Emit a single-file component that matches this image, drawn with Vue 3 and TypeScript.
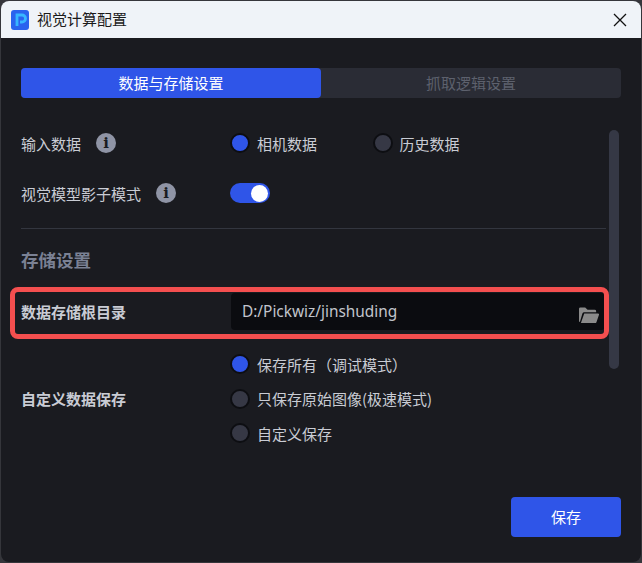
<script setup lang="ts">
const saveOptions = [
  { label: '保存所有（调试模式）', on: true },
  { label: '只保存原始图像(极速模式)', on: false },
  { label: '自定义保存', on: false },
]
</script>

<template>
  <div class="window">
    <header class="titlebar">
      <svg class="logo" width="18" height="20" viewBox="0 0 18 20">
        <rect x="0" y="0" width="18" height="20" rx="3" fill="#2a63ee" />
        <path d="M6 16V5h5a3.500 3.500 0 0 1 0 7H9" fill="none" stroke="#38b6ff" stroke-width="2.800" />
      </svg>
      <span class="title">视觉计算配置</span>
      <svg class="close" width="14" height="14" viewBox="0 0 14 14">
        <path d="M1 1l12 12M13 1L1 13" stroke="#111" stroke-width="1.300" fill="none" />
      </svg>
    </header>
    <main class="body">
      <div class="tabs">
        <div class="tab active">数据与存储设置</div>
        <div class="tab">抓取逻辑设置</div>
      </div>
      <div class="content">
        <div class="scrollbar"></div>
        <div class="row first">
          <div class="label">
            输入数据
            <span class="info">i</span>
          </div>
          <div class="radios">
            <label class="radio wide"><span class="dot on"></span>相机数据</label>
            <label class="radio"><span class="dot"></span>历史数据</label>
          </div>
        </div>
        <div class="row second">
          <div class="label">
            视觉模型影子模式
            <span class="info">i</span>
          </div>
          <div class="switch"><span class="knob"></span></div>
        </div>
        <div class="divider"></div>
        <h2 class="heading">存储设置</h2>
        <div class="row path">
          <span class="highlight"></span>
          <div class="label strong">数据存储根目录</div>
          <div class="input">
            <span>D:/Pickwiz/jinshuding</span>
            <svg class="folder" width="20" height="18" viewBox="0 0 21 18">
              <path d="M0 16V2.500A1.500 1.500 0 0 1 1.500 1h5L9 3.500h7.500A1.500 1.500 0 0 1 18 5v1H5.500A2 2 0 0 0 3.600 7.400L1 16z" fill="#8a8a8a" />
              <path d="M5.500 7.500H20a1 1 0 0 1 1 1.300L18.300 16.500a1.500 1.500 0 0 1-1.400 1H2z" fill="#8a8a8a" />
            </svg>
          </div>
        </div>
        <div class="row save">
          <div class="label strong">自定义数据保存</div>
          <div class="stack">
            <label v-for="o in saveOptions" :key="o.label" class="radio">
              <span class="dot" :class="{ on: o.on }"></span>{{ o.label }}
            </label>
          </div>
        </div>
      </div>
      <div class="footer">
        <button class="btn">保存</button>
      </div>
    </main>
  </div>
</template>

<style>
html, body { margin: 0; background: #35363b; }
</style>

<style scoped>
.window {
  width: 640px;
  height: 561px;
  margin: 1px;
  border-radius: 8px;
  overflow: hidden;
  background: #1a1b20;
  display: flex;
  flex-direction: column;
  font-family: "Noto Sans CJK SC", "Noto Sans", sans-serif;
  font-size: 15px;
  color: #c9ccd4;
}
.titlebar {
  height: 37px;
  flex: none;
  background: #eff3f8;
  display: flex;
  align-items: center;
  padding: 0 14px 0 10px;
  color: #1a1a1a;
}
.logo { margin-right: 8px; }
.title { flex: 1; padding-bottom: 3px; }
.body {
  flex: 1;
  display: flex;
  flex-direction: column;
  padding: 30px 20px 25px;
  min-height: 0;
}
.tabs {
  display: flex;
  height: 30px;
  background: #2a2c35;
  border-radius: 4px;
  flex: none;
}
.tab {
  flex: 1;
  display: flex;
  align-items: center;
  justify-content: center;
  border-radius: 4px;
  color: #5d616d;
  padding-bottom: 2px;
  box-sizing: border-box;
}
.tab.active { background: #2f55e8; color: #fff; }
.content {
  flex: 1;
  position: relative;
  padding-top: 32px;
  min-height: 0;
}
.scrollbar {
  position: absolute;
  right: 2px;
  top: 32px;
  width: 10px;
  height: 239px;
  background: #353845;
  border-radius: 5px;
}
.row { display: flex; align-items: center; position: relative; }
.first { height: 26px; }
.second { height: 26px; margin-top: 24px; }
.label { width: 209px; flex: none; display: flex; align-items: center; white-space: nowrap; }
.strong { font-weight: 700; color: #c9ccd4; }
.info {
  width: 20px;
  height: 20px;
  margin-left: 15px;
  border-radius: 50%;
  background: #8f94a5;
  color: #1a1b20;
  font-family: "DejaVu Serif", serif;
  font-weight: 700;
  font-size: 15px;
  line-height: 20px;
  text-align: center;
}
.radios { display: flex; }
.radio { display: flex; align-items: center; white-space: nowrap; }
.radio.wide { width: 142.500px; }
.dot {
  width: 16px;
  height: 16px;
  border: 2px solid #0d0e12;
  border-radius: 50%;
  background: #363845;
  margin-right: 7px;
  flex: none;
}
.dot.on { background: #2f55e8; }
.switch {
  width: 40px;
  height: 20px;
  border-radius: 10px;
  background: #2f55e8;
  display: flex;
  align-items: center;
  justify-content: flex-end;
  padding-right: 2px;
  box-sizing: border-box;
}
.knob { width: 17px; height: 17px; border-radius: 50%; background: #fff; }
.divider {
  height: 1px;
  width: 585px;
  background: #33363f;
  margin-top: 22px;
}
.heading {
  margin: 19px 0 0;
  font-size: 17.500px;
  line-height: 24px;
  font-weight: 700;
  color: #7a8194;
}
.path { margin-top: 21px; height: 37px; width: 584px; }
.highlight {
  position: absolute;
  left: -11px;
  top: -6px;
  right: -4px;
  bottom: -9px;
  border: 5px solid #f44f4f;
  border-radius: 8px;
}
.input {
  flex: 1;
  height: 37px;
  margin-left: 1px;
  background: #0b0c10;
  border-radius: 4px;
  display: flex;
  align-items: center;
  justify-content: space-between;
  padding: 0 6px 0 11px;
  font-family: "Noto Sans", sans-serif;
  font-size: 15.400px;
  color: #c2c5cc;
}
.folder { margin-top: 7px; }
.save { margin-top: 21px; }
.stack { display: flex; flex-direction: column; gap: 8.500px; }
.stack .radio { height: 26px; }
.footer { display: flex; justify-content: flex-end; flex: none; }
.btn {
  width: 110px;
  height: 40px;
  border: 0;
  border-radius: 4px;
  background: #2f55e8;
  color: #fff;
  font: inherit;
  padding: 0 0 2px;
}
</style>
